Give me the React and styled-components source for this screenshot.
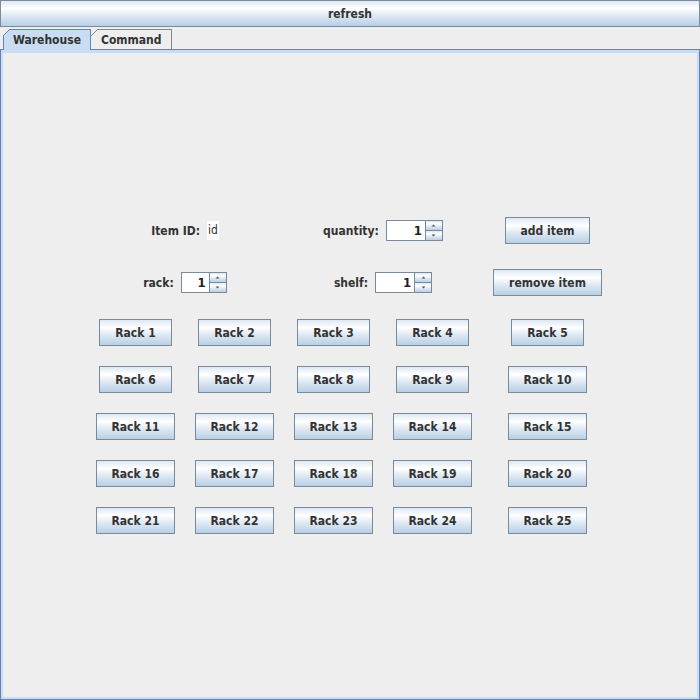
import styled, { createGlobalStyle } from "styled-components";

const FONT = `"DejaVu Sans Condensed", "DejaVu Sans", sans-serif`;
const GRADIENT = `linear-gradient(
  to bottom,
  #dde8f3 0%,
  #ffffff 30%,
  #dde8f3 60%,
  #b8cfe5 100%
)`;

const GlobalStyle = createGlobalStyle`
  html, body {
    margin: 0;
    padding: 0;
    background: #eeeeee;
  }
  body {
    font-family: ${FONT};
    font-stretch: condensed;
    font-size: 12px;
    color: #333333;
  }
`;

const Frame = styled.div`
  width: 700px;
  height: 700px;
  display: flex;
  flex-direction: column;
  background: #eeeeee;
`;

const RefreshBar = styled.button`
  height: 27px;
  width: 700px;
  margin: 0;
  padding: 0;
  border: 1px solid #7a8a99;
  background: ${GRADIENT};
  font-family: ${FONT};
  font-stretch: condensed;
  font-weight: bold;
  font-size: 12px;
  color: #333333;
`;

const TabStrip = styled.div`
  height: 22px;
  display: flex;
  align-items: flex-start;
  padding: 2px 0 0 3px;
  box-sizing: border-box;
`;

const Tab = styled.div`
  position: relative;
  z-index: 1;
  box-sizing: border-box;
  height: ${(p) => (p.$active ? "21px" : "20px")};
  padding: 0 9px 0 ${(p) => (p.$active ? "9px" : "10px")};
  display: flex;
  align-items: center;
  font-weight: bold;
  color: #333333;
  background: ${(p) => (p.$active ? "#c8ddf2" : "#eeeeee")};
  border-top: 1px solid ${(p) => (p.$active ? "#6382bf" : "#7a8a99")};
  border-right: 1px solid ${(p) => (p.$active ? "#6382bf" : "#7a8a99")};
  border-left: ${(p) => (p.$active ? "1px solid #6382bf" : "none")};

  &::before {
    content: "";
    position: absolute;
    top: -1px;
    left: ${(p) => (p.$active ? "-1px" : "0")};
    width: 7px;
    height: 7px;
    background: linear-gradient(
      to bottom right,
      #eeeeee 0 calc(50% - 0.6px),
      ${(p) => (p.$active ? "#6382bf" : "#7a8a99")} calc(50% - 0.6px)
        calc(50% + 0.6px),
      transparent calc(50% + 0.6px)
    );
  }
`;

const Panel = styled.div`
  flex: 1;
  border: 1px solid #6382bf;
  display: flex;
`;

const Content = styled.div`
  flex: 1;
  border-style: solid;
  border-color: #c8ddf2;
  border-width: 3px 2px 2px 2px;
  background: #eeeeee;
  padding: 164px 0 0 83px;
`;

const FormGrid = styled.div`
  display: grid;
  grid-template-columns: 99px 99px 99px 99px 131px;
  grid-template-rows: 27px 27px;
  row-gap: 25px;
  margin-bottom: 23px;
`;

const RackGrid = styled.div`
  display: grid;
  grid-template-columns: 99px 99px 99px 99px 131px;
  grid-auto-rows: 27px;
  row-gap: 20px;
`;

const FieldGroup = styled.div`
  grid-column: span 2;
  display: flex;
  align-items: center;
  justify-content: center;
  gap: 7px;
`;

const Label = styled.span`
  font-weight: bold;
  color: #333333;
`;

const IdField = styled.span`
  background: #ffffff;
  height: 19px;
  line-height: 19px;
  padding: 0 1px;
  font-weight: normal;
  color: #333333;
`;

const Button = styled.button`
  justify-self: center;
  height: 27px;
  margin: 0;
  padding: 0 15px;
  border: 1px solid #7a8a99;
  background: ${GRADIENT};
  font-family: ${FONT};
  font-stretch: condensed;
  font-weight: bold;
  font-size: 12px;
  color: #333333;
  white-space: nowrap;
`;

const SpinnerBox = styled.div`
  display: flex;
  height: 21px;
  box-sizing: border-box;
  border: 1px solid #7a8a99;
`;

const SpinnerField = styled.div`
  width: ${(p) => p.$width}px;
  background: #ffffff;
  box-sizing: border-box;
  padding-right: 3px;
  text-align: right;
  line-height: 19px;
  font-family: "DejaVu Sans", sans-serif;
  font-weight: bold;
  font-size: 13px;
  color: #222222;
`;

const ArrowColumn = styled.div`
  width: 16px;
  display: flex;
  flex-direction: column;
  border-left: 1px solid #7a8a99;
`;

const ArrowButton = styled.div`
  flex: 1;
  display: flex;
  align-items: center;
  justify-content: center;
  background: ${GRADIENT};
  border-top: ${(p) => (p.$down ? "1px solid #7a8a99" : "none")};
`;

const Arrow = ({ down }) => (
  <svg width="5" height="3" viewBox="0 0 5 3">
    <polygon
      points={down ? "0.5,0.5 4.5,0.5 2.5,2.5" : "0.5,2.5 4.5,2.5 2.5,0.5"}
      fill="#555555"
    />
  </svg>
);

const Spinner = ({ value, width }) => (
  <SpinnerBox>
    <SpinnerField $width={width}>{value}</SpinnerField>
    <ArrowColumn>
      <ArrowButton>
        <Arrow />
      </ArrowButton>
      <ArrowButton $down>
        <Arrow down />
      </ArrowButton>
    </ArrowColumn>
  </SpinnerBox>
);

const racks = Array.from({ length: 25 }, (_, i) => `Rack ${i + 1}`);

export default function App() {
  return (
    <Frame>
      <GlobalStyle />
      <RefreshBar>refresh</RefreshBar>
      <TabStrip>
        <Tab $active>Warehouse</Tab>
        <Tab>Command</Tab>
      </TabStrip>
      <Panel>
        <Content>
          <FormGrid>
            <FieldGroup>
              <Label>Item ID:</Label>
              <IdField>id</IdField>
            </FieldGroup>
            <FieldGroup>
              <Label>quantity:</Label>
              <Spinner value="1" width={38} />
            </FieldGroup>
            <Button>add item</Button>
            <FieldGroup>
              <Label>rack:</Label>
              <Spinner value="1" width={27} />
            </FieldGroup>
            <FieldGroup>
              <Label>shelf:</Label>
              <Spinner value="1" width={38} />
            </FieldGroup>
            <Button>remove item</Button>
          </FormGrid>
          <RackGrid>
            {racks.map((name) => (
              <Button key={name}>{name}</Button>
            ))}
          </RackGrid>
        </Content>
      </Panel>
    </Frame>
  );
}
